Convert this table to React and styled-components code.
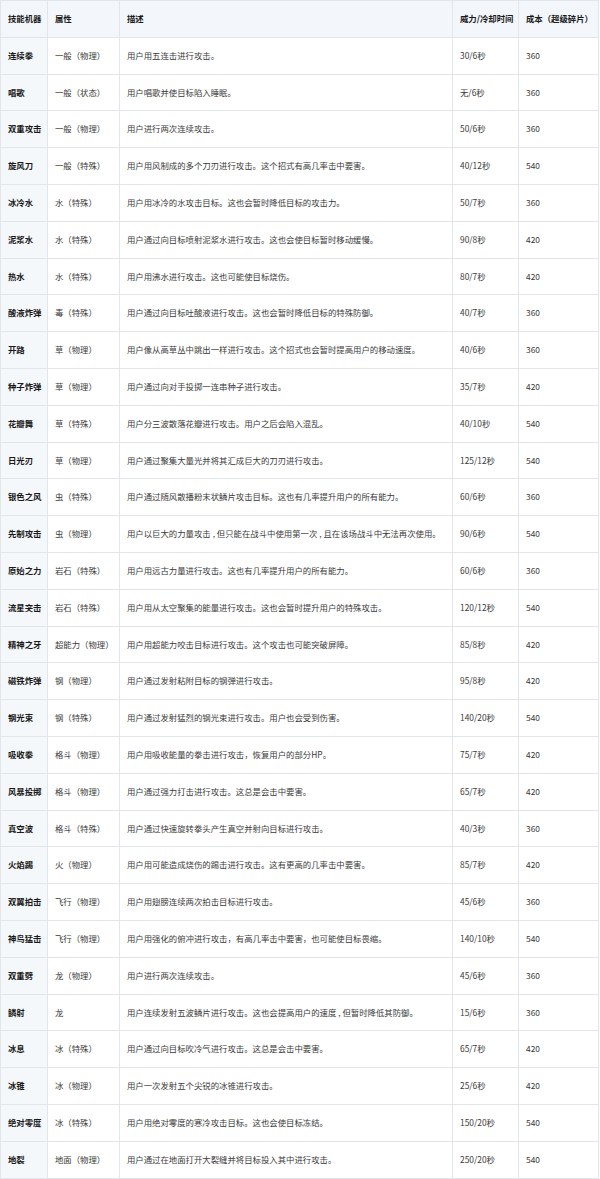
import React from 'react';
import styled, { createGlobalStyle } from 'styled-components';

const GlobalStyle = createGlobalStyle`
  body {
    margin: 0;
    background: #fff;
    font-family: "Noto Sans CJK SC", "Noto Sans", sans-serif;
  }
`;

const rows = [
  ['连续拳', '一般（物理）', '用户用五连击进行攻击。', '30/6秒', '360'],
  ['唱歌', '一般（状态）', '用户唱歌并使目标陷入睡眠。', '无/6秒', '360'],
  ['双重攻击', '一般（物理）', '用户进行两次连续攻击。', '50/6秒', '360'],
  ['旋风刀', '一般（特殊）', '用户用风制成的多个刀刃进行攻击。这个招式有高几率击中要害。', '40/12秒', '540'],
  ['冰冷水', '水（特殊）', '用户用冰冷的水攻击目标。这也会暂时降低目标的攻击力。', '50/7秒', '360'],
  ['泥浆水', '水（特殊）', '用户通过向目标喷射泥浆水进行攻击。这也会使目标暂时移动缓慢。', '90/8秒', '420'],
  ['热水', '水（特殊）', '用户用沸水进行攻击。这也可能使目标烧伤。', '80/7秒', '420'],
  ['酸液炸弹', '毒（特殊）', '用户通过向目标吐酸液进行攻击。这也会暂时降低目标的特殊防御。', '40/7秒', '360'],
  ['开路', '草（物理）', '用户像从高草丛中跳出一样进行攻击。这个招式也会暂时提高用户的移动速度。', '40/6秒', '360'],
  ['种子炸弹', '草（物理）', '用户通过向对手投掷一连串种子进行攻击。', '35/7秒', '420'],
  ['花瓣舞', '草（特殊）', '用户分三波散落花瓣进行攻击。用户之后会陷入混乱。', '40/10秒', '540'],
  ['日光刃', '草（物理）', '用户通过聚集大量光并将其汇成巨大的刀刃进行攻击。', '125/12秒', '540'],
  ['银色之风', '虫（特殊）', '用户通过随风散播粉末状鳞片攻击目标。这也有几率提升用户的所有能力。', '60/6秒', '360'],
  ['先制攻击', '虫（物理）', '用户以巨大的力量攻击 , 但只能在战斗中使用第一次 , 且在该场战斗中无法再次使用。', '90/6秒', '540'],
  ['原始之力', '岩石（特殊）', '用户用远古力量进行攻击。这也有几率提升用户的所有能力。', '60/6秒', '360'],
  ['流星突击', '岩石（特殊）', '用户用从太空聚集的能量进行攻击。这也会暂时提升用户的特殊攻击。', '120/12秒', '540'],
  ['精神之牙', '超能力（物理）', '用户用超能力咬击目标进行攻击。这个攻击也可能突破屏障。', '85/8秒', '420'],
  ['磁铁炸弹', '钢（物理）', '用户通过发射粘附目标的钢弹进行攻击。', '95/8秒', '420'],
  ['钢光束', '钢（特殊）', '用户通过发射猛烈的钢光束进行攻击。用户也会受到伤害。', '140/20秒', '540'],
  ['吸收拳', '格斗（物理）', '用户用吸收能量的拳击进行攻击，恢复用户的部分HP。', '75/7秒', '420'],
  ['风暴投掷', '格斗（物理）', '用户通过强力打击进行攻击。这总是会击中要害。', '65/7秒', '420'],
  ['真空波', '格斗（特殊）', '用户通过快速旋转拳头产生真空并射向目标进行攻击。', '40/3秒', '360'],
  ['火焰踢', '火（物理）', '用户用可能造成烧伤的踢击进行攻击。这有更高的几率击中要害。', '85/7秒', '420'],
  ['双翼拍击', '飞行（物理）', '用户用翅膀连续两次拍击目标进行攻击。', '45/6秒', '360'],
  ['神鸟猛击', '飞行（物理）', '用户用强化的俯冲进行攻击，有高几率击中要害，也可能使目标畏缩。', '140/10秒', '540'],
  ['双重劈', '龙（物理）', '用户进行两次连续攻击。', '45/6秒', '360'],
  ['鳞射', '龙', '用户连续发射五波鳞片进行攻击。这也会提高用户的速度 , 但暂时降低其防御。', '15/6秒', '360'],
  ['冰息', '冰（特殊）', '用户通过向目标吹冷气进行攻击。这总是会击中要害。', '65/7秒', '420'],
  ['冰锥', '冰（物理）', '用户一次发射五个尖锐的冰锥进行攻击。', '25/6秒', '420'],
  ['绝对零度', '冰（特殊）', '用户用绝对零度的寒冷攻击目标。这也会使目标冻结。', '150/20秒', '540'],
  ['地裂', '地面（物理）', '用户通过在地面打开大裂缝并将目标投入其中进行攻击。', '250/20秒', '540'],
];

const headers = ['技能机器', '属性', '描述', '威力/冷却时间', '成本（超级碎片）'];
const widths = [47, 72, 333, 66, 80];

const Table = styled.table`
  width: 599px;
  border-collapse: collapse;
  table-layout: fixed;
  font-size: 8.4px;
  line-height: 1.4;
  color: #3a3a3a;
`;

const Row = styled.tr`
  height: 36.8px;
`;

const HeadCell = styled.th`
  background: #f3f6fa;
  border: 1px solid #e2e6eb;
  padding: 0 7px;
  text-align: left;
  font-weight: 700;
  color: #1a1a1a;
  white-space: nowrap;
`;

const Cell = styled.td`
  border: 1px solid #e2e6eb;
  padding: 0 7px;
  white-space: nowrap;
  overflow: hidden;
  background: ${(p) => (p.$first ? '#f5f8fa' : '#fff')};
  font-weight: ${(p) => (p.$first ? 700 : 400)};
  color: ${(p) => (p.$first ? '#1a1a1a' : '#3a3a3a')};
`;

export default function App() {
  return (
    <>
      <GlobalStyle />
      <Table>
        <colgroup>
          {widths.map((w, i) => (
            <col key={i} style={{ width: w }} />
          ))}
        </colgroup>
        <thead>
          <Row>
            {headers.map((h) => (
              <HeadCell key={h}>{h}</HeadCell>
            ))}
          </Row>
        </thead>
        <tbody>
          {rows.map((r) => (
            <Row key={r[0]}>
              {r.map((c, i) => (
                <Cell key={i} $first={i === 0}>
                  {c}
                </Cell>
              ))}
            </Row>
          ))}
        </tbody>
      </Table>
    </>
  );
}
